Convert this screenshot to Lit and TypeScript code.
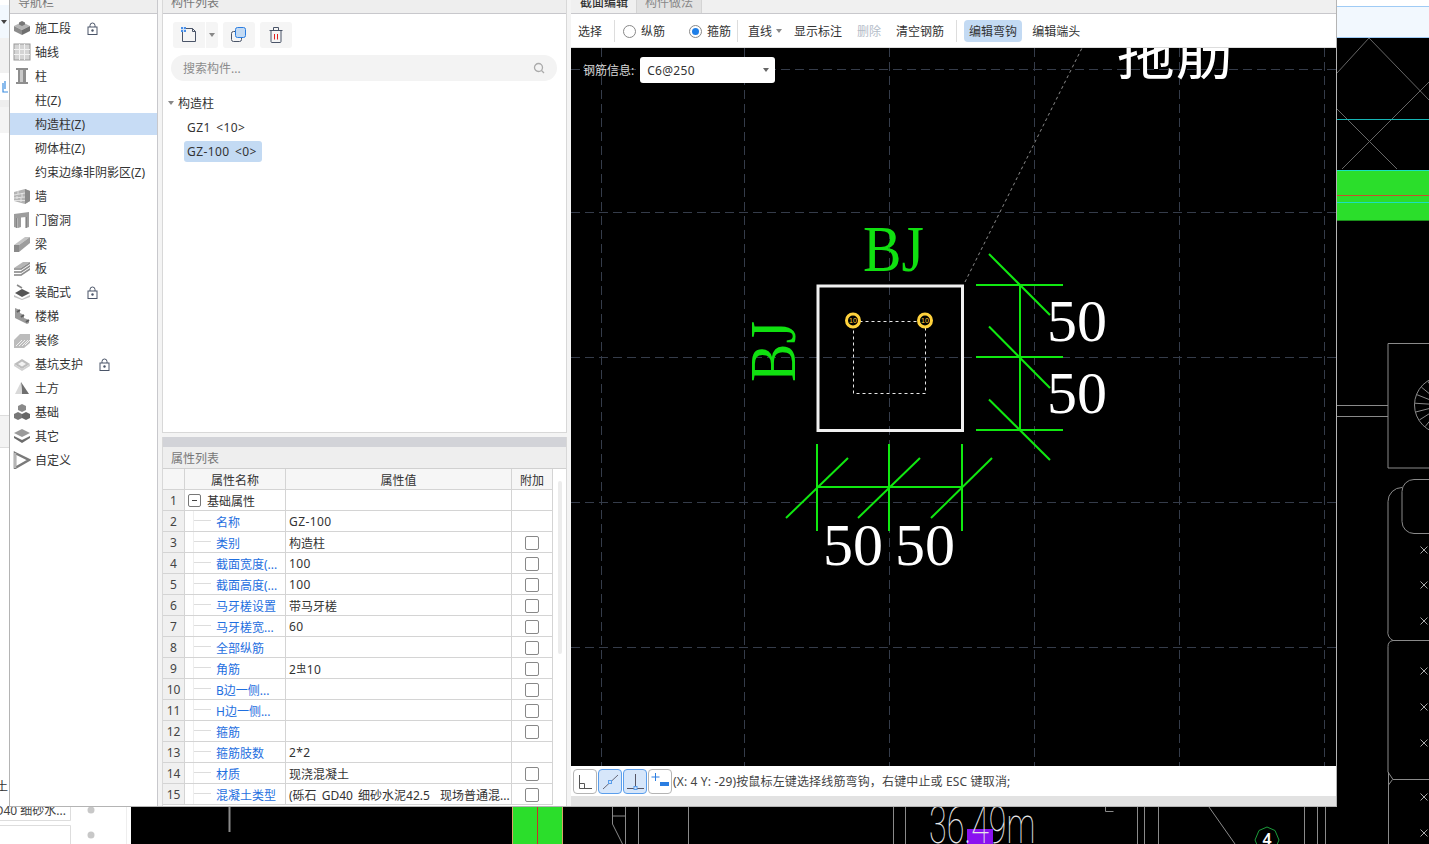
import { LitElement, html, css, svg } from "lit";
import { customElement } from "lit/decorators.js";

const navIcons: Record<string, unknown> = {
  box: svg`<path d="M1 7l8-4 8 4-8 4z" fill="#b5b5b5"/><path d="M1 7v5l8 4v-5z" fill="#8c8c8c"/><path d="M17 7v5l-8 4v-5z" fill="#6f6f6f"/><path d="M6 3.500l3-1.500 3 1.500v2l-3 1.500-3-1.500z" fill="#777"/>`,
  grid: svg`<rect x="1" y="1" width="16" height="16" fill="#d4d4d4" stroke="#999"/><path d="M6.500 1v16M11.500 1v16M1 6.500h16M1 11.500h16" stroke="#f2f2f2"/>`,
  column: svg`<path d="M3 1h12v2h-2v12h2v2H3v-2h2V3H3z" fill="#8e8e8e"/><rect x="7" y="3" width="3" height="12" fill="#c9c9c9"/>`,
  wall: svg`<path d="M1 5l11-3 5 2v10l-5 3-11-3z" fill="#b4b4b4"/><path d="M12 2v15l5-3V4z" fill="#8a8a8a"/><path d="M1 8l11-2M1 11l11-1M1 13.500l11 0M5 4v3M9 6v4M4 9v3M8 11v4" stroke="#eee" stroke-width=".8" fill="none"/>`,
  door: svg`<path d="M1 3l15-2v15l-3 1V6L8 6.500V16l-3 1V7L4 7.200V17l-3-1z" fill="#9d9d9d"/><path d="M4 7v10M13 6v11" stroke="#6e6e6e"/>`,
  beam: svg`<path d="M1 10l11-8h5l-11 8z" fill="#c4c4c4"/><path d="M1 10h5v7H1z" fill="#8a8a8a"/><path d="M6 10l11-8v6L6 17z" fill="#9d9d9d"/>`,
  slab: svg`<path d="M1 9l9-6h7l-9 6z" fill="#b5b5b5"/><path d="M1 9h7v2H1zM1 12h7v2H1zM1 15h7v2H1z" fill="#a0a0a0"/><path d="M8 9l9-6v2l-9 6zM8 12l9-6v2l-9 6zM8 15l9-6v2l-9 6z" fill="#8c8c8c"/>`,
  tray: svg`<path d="M2 10l7-4 8 4-8 4z" fill="#555"/><path d="M1 12l8 4 8-4v2l-8 3-8-3z" fill="#c0c0c0"/><path d="M4 2l5 3" stroke="#888" stroke-width="1.500"/>`,
  stairs: svg`<path d="M2 1l5 2v3l4 2v3l5 2v3l-2 1-12-6z" fill="#9a9a9a"/><path d="M7 3l-3 2M11 8l-3 2M16 13l-3 2" stroke="#5f5f5f" stroke-width="2"/>`,
  finish: svg`<path d="M1 9l6-6h10v9l-6 5H1z" fill="#bcbcbc"/><path d="M3 15l6-6M6 15l6-6M9 15l6-6M12 14l5-5" stroke="#f0f0f0"/>`,
  pit: svg`<path d="M1 9l8-5 8 5-8 5z" fill="#bdbdbd"/><path d="M5 9l4-2.500L13 9l-4 2.500z" fill="#f2f2f2"/><path d="M1 9v2l8 5 8-5V9l-8 5z" fill="#d0d0d0"/>`,
  earth: svg`<path d="M8 3l8 12H9z" fill="#6f6f6f"/><path d="M8 3L2 15h7z" fill="#d9d9d9"/>`,
  found: svg`<path d="M9 1l4 2v4l-4 2-4-2V3z" fill="#8a8a8a"/><path d="M5 9l4 2v4l-4 2-4-2v-4z" fill="#777"/><path d="M13 9l4 2v4l-4 2-4-2v-4z" fill="#666"/>`,
  layers: svg`<path d="M9 2l8 4-8 4-8-4z" fill="#9a9a9a"/><path d="M1 9l8 4 8-4v2l-8 5-8-5z" fill="#6c6c6c"/>`,
  custom: svg`<path d="M2 2l14 7-14 8z" fill="none" stroke="#7a7a7a" stroke-width="2.500"/><path d="M2 2v15" stroke="#b5b5b5" stroke-width="2.500"/>`,
};

const navRows = [
  { label: "施工段", icon: "box", lock: true },
  { label: "轴线", icon: "grid" },
  { label: "柱", icon: "column" },
  { label: "柱(Z)" },
  { label: "构造柱(Z)", selected: true },
  { label: "砌体柱(Z)" },
  { label: "约束边缘非阴影区(Z)" },
  { label: "墙", icon: "wall" },
  { label: "门窗洞", icon: "door" },
  { label: "梁", icon: "beam" },
  { label: "板", icon: "slab" },
  { label: "装配式", icon: "tray", lock: true },
  { label: "楼梯", icon: "stairs" },
  { label: "装修", icon: "finish" },
  { label: "基坑支护", icon: "pit", lock: true },
  { label: "土方", icon: "earth" },
  { label: "基础", icon: "found" },
  { label: "其它", icon: "layers" },
  { label: "自定义", icon: "custom" },
];

const propRows = [
  { name: "名称", value: "GZ-100" },
  { name: "类别", value: "构造柱", check: true },
  { name: "截面宽度(...", value: "100", check: true },
  { name: "截面高度(...", value: "100", check: true },
  { name: "马牙槎设置", value: "带马牙槎", check: true },
  { name: "马牙槎宽...", value: "60", check: true },
  { name: "全部纵筋", value: "", check: true },
  { name: "角筋", value: "rebar", check: true },
  { name: "B边一侧...", value: "", check: true },
  { name: "H边一侧...", value: "", check: true },
  { name: "箍筋", value: "", check: true },
  { name: "箍筋肢数", value: "2*2" },
  { name: "材质", value: "现浇混凝土", check: true },
  { name: "混凝土类型", value: "(砾石 GD40 细砂水泥42.5  现场普通混...", check: true },
];

const lockIcon = html`<svg class="lock" width="11" height="13" viewBox="0 0 11 13">
  <path d="M3 5V3.500a2.500 2.500 0 0 1 5 0V5" fill="none" stroke="#4a5468"/>
  <rect x="1" y="5" width="9" height="7.500" fill="#fff" stroke="#4a5468"/>
  <circle cx="5.500" cy="8.500" r="1.200" fill="#4a5468"/>
</svg>`;

@customElement("app-root")
export class AppRoot extends LitElement {
  static styles = css`
    :host {
      display: block;
      position: relative;
      width: 1429px;
      height: 844px;
      overflow: hidden;
      background: #fff;
      font-family: "Noto Sans", "Noto Sans CJK SC", sans-serif;
      font-size: 12px;
      color: #333;
    }
    .backdrop {
      position: absolute;
      inset: 0;
    }
    .dialog {
      position: absolute;
      left: 9px;
      top: -11px;
      width: 1328px;
      height: 818px;
      box-sizing: border-box;
      border: 1px solid #b4b4b4;
      background: #f4f4f4;
      display: grid;
      grid-template-columns: 148px 405px 765px;
      column-gap: 4px;
    }
    .panel {
      background: #fff;
      display: flex;
      flex-direction: column;
      min-height: 0;
    }
    .head {
      height: 23px;
      flex: none;
      display: flex;
      align-items: center;
      padding-left: 8px;
      background: #eee;
      border-bottom: 1px solid #c8c8cc;
      color: #777;
    }
    .nav {
      border-right: 1px solid #c8c8cc;
      box-sizing: border-box;
    }
    .nav-list {
      padding-top: 3px;
      display: flex;
      flex-direction: column;
      gap: 2px;
    }
    .nav-row {
      height: 22px;
      display: flex;
      align-items: center;
      padding-left: 3px;
    }
    .nav-row.selected {
      background: #c7dcf5;
    }
    .nav-icon {
      width: 18px;
      height: 18px;
      flex: none;
      margin-right: 4px;
    }
    .nav-gap {
      width: 18px;
      flex: none;
      margin-right: 4px;
    }
    .nav-label {
      white-space: nowrap;
    }
    .lock {
      margin-left: 16px;
      flex: none;
    }
    .mid {
      display: flex;
      flex-direction: column;
      gap: 4px;
      min-height: 0;
    }
    .list {
      height: 443px;
      flex: none;
      border: 1px solid #d8d8d8;
      border-top: none;
      box-sizing: border-box;
    }
    .tools {
      display: flex;
      align-items: center;
      padding: 8px 0 0 10px;
      height: 26px;
      flex: none;
    }
    .tool {
      height: 26px;
      background: #f5f5f5;
      border-radius: 3px;
      display: flex;
      align-items: center;
      justify-content: center;
      width: 32px;
      margin-right: 5px;
    }
    .tool.main {
      margin-right: 1px;
      border-radius: 3px 0 0 3px;
    }
    .tool.drop {
      width: 12px;
      border-radius: 0 3px 3px 0;
    }
    .caret {
      width: 0;
      height: 0;
      border-left: 3px solid transparent;
      border-right: 3px solid transparent;
      border-top: 4px solid #888;
    }
    .search {
      margin: 7px 9px 0 8px;
      height: 26px;
      flex: none;
      border-radius: 13px;
      background: #f3f3f3;
      display: flex;
      align-items: center;
      justify-content: space-between;
      padding: 0 12px;
      color: #8c8c8c;
    }
    .tree {
      padding: 10px 0 0 5px;
    }
    .tree-root {
      height: 24px;
      display: flex;
      align-items: center;
      gap: 4px;
    }
    .tree-leaf {
      height: 21px;
      display: inline-flex;
      align-items: center;
      padding: 0 5px 0 3px;
      margin: 1.500px 0 1.500px 16px;
      border-radius: 3px;
      word-spacing: 2px;
      letter-spacing: 0.4px;
    }
    .tree-leaf.selected {
      background: #c3daf3;
    }
    .props {
      flex: 1;
      min-height: 0;
      display: flex;
      flex-direction: column;
      border: 1px solid #d8d8d8;
      border-top: none;
      border-bottom: none;
      box-sizing: border-box;
    }
    .band {
      height: 10px;
      flex: none;
      background: #d2d3d8;
    }
    .props .head {
      height: 21px;
      border-bottom: 1px solid #d0d0d0;
    }
    .table-wrap {
      position: relative;
      flex: 1;
      min-height: 0;
    }
    .thumb {
      position: absolute;
      left: 395px;
      top: 12px;
      width: 4px;
      height: 173px;
      border-radius: 2px;
      background: #ececec;
    }
    .tr {
      display: grid;
      grid-template-columns: 22px 101px 226px 41px;
      width: 390px;
      height: 21px;
    }
    .td {
      box-sizing: border-box;
      border-right: 1px solid #d4d4d4;
      border-bottom: 1px solid #d4d4d4;
      padding-top: 1px;
      display: flex;
      align-items: center;
      min-width: 0;
      white-space: nowrap;
      overflow: hidden;
    }
    .td.idx {
      background: #f0f0f0;
      justify-content: center;
      color: #444;
    }
    .header .td {
      background: #f6f6f6;
      justify-content: center;
    }
    .td.name {
      color: #1f6fe0;
      position: relative;
      padding-left: 31px;
    }
    .td.name.root {
      color: #333;
      padding-left: 3px;
      gap: 6px;
    }
    .tick {
      position: absolute;
      left: 8px;
      top: 0;
      bottom: 0;
      width: 17px;
      border-left: 1px solid #eee;
    }
    .tick::after {
      content: "";
      position: absolute;
      left: 0;
      right: 0;
      top: 9px;
      border-top: 1px solid #ddd;
    }
    .minus {
      width: 11px;
      height: 11px;
      border: 1px solid #777;
      border-radius: 2px;
      display: flex;
      align-items: center;
      justify-content: center;
      flex: none;
    }
    .minus::after {
      content: "";
      width: 5px;
      border-top: 1px solid #444;
    }
    .td.val {
      padding-left: 3px;
      white-space: pre;
      word-spacing: 2px;
    }
    .td.val.latin {
      letter-spacing: 0.4px;
    }
    .td.add {
      justify-content: center;
    }
    .check {
      width: 12px;
      height: 12px;
      border: 1px solid #888;
      border-radius: 2px;
      background: #fff;
    }
    .rebar {
      font-size: 10px;
      vertical-align: 2px;
    }
    .editor {
      display: flex;
      flex-direction: column;
      min-height: 0;
    }
    .tabs {
      height: 23px;
      flex: none;
      display: flex;
      padding-left: 1px;
      background: #f0f0f0;
      border-bottom: 1px solid #c8c8cc;
    }
    .tab {
      width: 65px;
      display: flex;
      align-items: center;
      justify-content: center;
      box-sizing: border-box;
      border-right: 1px solid #d4d4d4;
      color: #333;
      font-weight: 500;
    }
    .tab.off {
      background: #e2e2e2;
      color: #888;
      font-weight: 400;
    }
    .bar {
      height: 34px;
      flex: none;
      display: flex;
      align-items: center;
      padding: 1px 0 0 7px;
      background: #fff;
      box-sizing: border-box;
      border-bottom: 1px solid #ddd;
      white-space: nowrap;
    }
    .sep {
      width: 1px;
      height: 22px;
      background: #ddd;
      flex: none;
    }
    .sep.a {
      margin: 0 8px 0 12px;
    }
    .sep.b {
      margin: 0 10px 0 6px;
    }
    .sep.c {
      margin: 0 7px 0 12px;
    }
    .radio {
      display: flex;
      align-items: center;
      gap: 5px;
    }
    .radio + .radio {
      margin-left: 24px;
    }
    .dot {
      width: 13px;
      height: 13px;
      box-sizing: border-box;
      border: 1px solid #888;
      border-radius: 50%;
      display: flex;
      align-items: center;
      justify-content: center;
    }
    .dot.on::after {
      content: "";
      width: 7px;
      height: 7px;
      border-radius: 50%;
      background: #1f7fe8;
    }
    .act {
      margin-left: 15px;
    }
    .act.first {
      margin-left: 12px;
    }
    .act.last {
      margin-left: 10px;
    }
    .act.dim {
      color: #b4bcc8;
    }
    .hot {
      background: #c3daf3;
      border-radius: 4px;
      padding: 3px 5px;
      height: 16px;
      display: flex;
      align-items: center;
    }
    .line-type {
      display: flex;
      align-items: center;
      gap: 4px;
    }
    .canvas {
      height: 718px;
      flex: none;
      position: relative;
      background: #000;
      overflow: hidden;
    }
    .canvas svg {
      position: absolute;
      inset: 0;
    }
    .rebar-info {
      position: absolute;
      left: 12px;
      top: 9px;
      display: flex;
      align-items: center;
      gap: 6px;
      color: #d8d8d8;
    }
    .select {
      width: 135px;
      height: 26px;
      box-sizing: border-box;
      background: #fff;
      border-radius: 3px;
      color: #333;
      display: flex;
      align-items: center;
      justify-content: space-between;
      padding: 0 6px 0 7px;
      letter-spacing: 0.3px;
    }
    .select .caret {
      border-top-color: #666;
    }
    .status {
      height: 30px;
      box-sizing: border-box;
      flex: none;
      background: #fff;
      display: flex;
      align-items: flex-start;
      padding: 3px 0 0 2px;
      gap: 1px;
      white-space: nowrap;
    }
    .st-btn {
      width: 24px;
      height: 25px;
      box-sizing: border-box;
      border: 1px solid #b4b4b4;
      border-radius: 4px;
      background: #fff;
      flex: none;
    }
    .st-btn.on {
      border-color: #5a9eec;
      background: #d6e6fa;
    }
    .st-text {
      line-height: 25px;
      color: #444;
      letter-spacing: 0.15px;
    }
    .foot {
      height: 10px;
      flex: none;
      background: #e2e2e2;
    }
  `;

  backdrop() {
    const crosses = [550, 585, 621, 671, 707, 743, 797, 833];
    const spokes = [0, 1, 2, 3, 4, 5, 6, 7].map((i) => {
      const a = Math.PI * (0.62 + i * 0.1);
      return svg`<line x1=${1443 + 28 * Math.cos(a)} y1=${405 + 28 * Math.sin(a)} x2=${1443 + 10 * Math.cos(a)} y2=${405 + 10 * Math.sin(a)} />`;
    });
    return html`<svg class="backdrop" width="1429" height="844" viewBox="0 0 1429 844">
      <rect x="1337" y="38" width="92" height="806" fill="#000" />
      <rect x="131" y="807" width="1298" height="37" fill="#000" />
      <rect x="1337" y="6" width="92" height="32" fill="#f2f8fe" />
      <path d="M1337 6.500h92M1337 37.500h92" stroke="#9fcbf5" />

      <rect x="0" y="5" width="9" height="33" fill="#f2f8fe" />
      <path d="M1 20h6l-3 4z" fill="#444" />
      <rect x="0" y="38" width="9" height="35" fill="#f1f1f1" />
      <rect x="0" y="100" width="9" height="7" fill="#eee" />
      <rect x="0" y="107" width="9" height="26" fill="#f4f4f4" />
      <path d="M3 83v9h5M5 81v8" fill="none" stroke="#3c8ee0" stroke-width="1.200" />
      <rect x="0" y="415" width="9" height="33" fill="#f3f3f3" />
      <path d="M0 415.500h9M0 447.500h9" stroke="#ddd" />
      <text x="-4" y="791" font-size="12" fill="#333">土</text>

      <path d="M0 820.500h70.500V807M0 825.500h70.500V844" fill="none" stroke="#ddd" />
      <text x="66" y="815" font-size="12" fill="#444" text-anchor="end">GD40 细砂水...</text>
      <circle cx="91" cy="810" r="3.500" fill="#c8c8c8" />
      <circle cx="91" cy="835" r="3.500" fill="#c8c8c8" />
      <path d="M126.500 807v37" stroke="#eee" />

      <g fill="none" stroke="#666" stroke-width="1">
        <path d="M1337 73L1369 38L1429 100M1337 109L1397 169M1342 169L1429 82" />
      </g>
      <path d="M1337 119.500h92" stroke="#17b5b5" />
      <rect x="1337" y="170" width="92" height="50" fill="#2bde2b" />
      <path d="M1337 170.500h92M1337 202.500h92" stroke="#19e0c0" />
      <path d="M1337 195.500h92" stroke="#c8502a" />
      <path d="M1337 220.500h92" stroke="#1b8f1b" />

      <g fill="none" stroke="#8a8a8a" stroke-width="1">
        <path d="M1429 343.500h-41v124.500h41M1337 405.500h51M1337 416.500h51" />
        <circle cx="1443" cy="405" r="28.500" />
        ${spokes}
        <path d="M1429 479.500h-15a12 12 0 0 0-12 12v30a12 12 0 0 0 12 12h15" />
        <path d="M1402 487.500a14 14 0 0 0-14 14V630a10 10 0 0 0 5 10.500h36" />
        <path d="M1393 640.500a6 6 0 0 0-5 6V772l5 7.500h36" />
        <path d="M1388.500 785l4-5.500M1388.500 772v72" />
      </g>
      <g fill="none" stroke="#a8a8a8">
        ${crosses.map((y) => svg`<path d="M1420.500 ${y - 3.500}l7 7m0-7l-7 7" />`)}
      </g>

      <rect x="513" y="807" width="49" height="37" fill="#2bde2b" />
      <path d="M512.500 807v37M562.500 807v37" stroke="#d9a06a" />
      <path d="M537.500 807v37" stroke="#c8302a" />
      <g fill="none" stroke="#8a8a8a">
        <path d="M229.500 807v25" stroke-width="2" />
        <path d="M612.500 807v17l10 20M625.500 807v37M612 816h13" />
        <path d="M638.500 807v37M688.500 807v37M893.500 807v37M905.500 807v37M1137.500 807v37M1144.500 807v37M1158.500 807v37M1304.500 807v37M1317.500 807v37M1325.500 807v37M1209 807l26 37M1105.500 807v4.500h8" />
      </g>
      <rect x="967" y="829" width="26" height="15" fill="#8a12f0" />
      <text transform="translate(929 843) scale(.62 1)" font-family="Roboto" font-weight="100" font-size="52" fill="#e8e8e8">36.49m</text>
      <path d="M1267 827l8 3.500 4 9.500-4 9.500h-16l-4-9.500 4-9.500z" fill="none" stroke="#1b9c3a" />
      <text x="1267" y="845" font-size="16" font-weight="600" fill="#fff" text-anchor="middle">4</text>
    </svg>`;
  }

  drawing() {
    const greenDiag = [
      [989, 254, 1050, 315],
      [989, 326.5, 1050, 388],
      [989, 399.5, 1050, 460],
      [786, 518, 848, 458],
      [858, 518, 920, 458],
      [931, 518, 992, 458],
    ];
    const gridX = [601, 744, 889, 1034, 1179, 1324];
    const gridY = [69, 212, 357, 502, 647];
    return html`<svg width="765" height="718" viewBox="571 48 765 718">
      <g stroke="#353c4a" stroke-dasharray="9 5" fill="none">
        ${gridX.map((x) => svg`<line x1=${x + 0.5} y1="48" x2=${x + 0.5} y2="766" />`)}
        ${gridY.map((y) => svg`<line x1="571" y1=${y + 0.5} x2="1336" y2=${y + 0.5} />`)}
      </g>
      <path d="M965 282L1082 48" stroke="#8a8a8a" stroke-dasharray="3 3" fill="none" />
      <text x="1117" y="74" font-family="'Noto Sans CJK SC'" font-weight="400" font-size="58" fill="#fff">拖筋</text>

      <rect x="818" y="286" width="144.500" height="144.500" fill="none" stroke="#f0f0f0" stroke-width="3" />
      <path d="M853.500 321.500h72v72h-72z" fill="none" stroke="#e8e8e8" stroke-dasharray="3 3" />
      <g fill="#000" stroke="#ffd23c" stroke-width="3">
        <circle cx="853" cy="320.500" r="6.500" />
        <circle cx="925" cy="320.500" r="6.500" />
      </g>
      <g font-size="7" fill="#ffd23c" text-anchor="middle" font-family="'Liberation Sans'">
        <text x="853" y="323">10</text>
        <text x="925" y="323">10</text>
      </g>

      <g stroke="#10e810" stroke-width="2" fill="none">
        <path d="M1020 285v145M976 285h87M976 357h87M976 430h87" />
        <path d="M817 487h145M817 444v87M889 444v87M962 444v87" />
        ${greenDiag.map((d) => svg`<line x1=${d[0]} y1=${d[1]} x2=${d[2]} y2=${d[3]} />`)}
      </g>

      <g font-family="'Liberation Serif'" font-size="60">
        <text transform="translate(863 271) scale(.96 1.08)" fill="#10e010">BJ</text>
        <text transform="translate(795 382) rotate(-90) scale(.96 1.08)" fill="#10e010">BJ</text>
        <g fill="#fff">
          <text x="1047" y="341">50</text>
          <text x="1047" y="413">50</text>
          <text x="823" y="565">50</text>
          <text x="895" y="565">50</text>
        </g>
      </g>
    </svg>`;
  }

  statusIcons() {
    return html`
      <div class="st-btn">
        <svg width="22" height="23" viewBox="0 0 22 23" fill="none" stroke="#555">
          <path d="M5.500 5v13.500H18M5.500 13.500h5v5" />
        </svg>
      </div>
      <div class="st-btn on">
        <svg width="22" height="23" viewBox="0 0 22 23" fill="none" stroke="#667">
          <path d="M4 19L19 5" />
          <rect x="9.500" y="10.500" width="3" height="3" fill="#cfe0f6" stroke="#5a9eec" />
        </svg>
      </div>
      <div class="st-btn on">
        <svg width="22" height="23" viewBox="0 0 22 23" fill="none" stroke="#556">
          <path d="M11.500 4v14M3 18.500h17" />
          <rect x="10" y="16.500" width="3" height="3" fill="#cfe0f6" stroke="#5a9eec" />
        </svg>
      </div>
      <div class="st-btn">
        <svg width="22" height="23" viewBox="0 0 22 23" fill="none">
          <path d="M6.500 3v8M2.500 7h8" stroke="#2a7de1" />
          <rect x="11" y="12" width="9" height="4" fill="#2a7de1" />
        </svg>
      </div>
    `;
  }

  listPanel() {
    return html`<div class="panel list">
      <div class="head">构件列表</div>
      <div class="tools">
        <div class="tool main">
          <svg width="18" height="18" viewBox="0 0 18 18" fill="none">
            <path d="M2.500 4v11.500h13V5.500l-3-3H6" stroke="#4a5468" />
            <path d="M12.500 2.500v3h3" stroke="#4a5468" />
            <rect x="1" y="1" width="5" height="5" fill="#4a90e8" />
            <path d="M1 3.500h5M3.500 1v5" stroke="#cfe0f6" />
          </svg>
        </div>
        <div class="tool drop"><span class="caret"></span></div>
        <div class="tool">
          <svg width="18" height="18" viewBox="0 0 18 18" fill="none">
            <rect x="1.500" y="5.500" width="10" height="10" rx="2" stroke="#4a5468" />
            <rect x="5.500" y="1.500" width="10" height="10" rx="2" fill="#c3daf3" stroke="#2a7de1" />
          </svg>
        </div>
        <div class="tool">
          <svg width="16" height="18" viewBox="0 0 16 18" fill="none" stroke="#4a5468">
            <path d="M1.500 4.500h13M3 4.500V15.500a1 1 0 0 0 1 1h8a1 1 0 0 0 1-1V4.500M5.500 4.500V1.500h5v3" />
            <path d="M6.500 8v5.500M9.500 8v5.500" stroke="#e02020" />
          </svg>
        </div>
      </div>
      <div class="search">
        <span>搜索构件...</span>
        <svg width="12" height="12" viewBox="0 0 12 12" fill="none" stroke="#aaa" stroke-width="1.300">
          <circle cx="5.500" cy="5.500" r="4" /><path d="M8.500 8.500l2.500 2.500" />
        </svg>
      </div>
      <div class="tree">
        <div class="tree-root"><span class="caret"></span>构造柱</div>
        <div><span class="tree-leaf">GZ1 &lt;10&gt;</span></div>
        <div><span class="tree-leaf selected">GZ-100 &lt;0&gt;</span></div>
      </div>
    </div>`;
  }

  propsPanel() {
    return html`<div class="panel props">
      <div class="band"></div>
      <div class="head">属性列表</div>
      <div class="table-wrap">
        <div class="tr header">
          <div class="td"></div>
          <div class="td">属性名称</div>
          <div class="td">属性值</div>
          <div class="td">附加</div>
        </div>
        <div class="tr">
          <div class="td idx">1</div>
          <div class="td name root"><span class="minus"></span>基础属性</div>
          <div class="td"></div>
          <div class="td"></div>
        </div>
        ${propRows.map(
          (r, i) => html`<div class="tr">
            <div class="td idx">${i + 2}</div>
            <div class="td name"><span class="tick"></span>${r.name}</div>
            <div class="td val ${/^[\x20-\x7e]+$/.test(r.value) ? "latin" : ""}">${r.value === "rebar"
              ? html`<span>2<span class="rebar">虫</span>10</span>`
              : r.value}</div>
            <div class="td add">${r.check ? html`<span class="check"></span>` : ""}</div>
          </div>`
        )}
        <div class="thumb"></div>
      </div>
    </div>`;
  }

  render() {
    return html`
      ${this.backdrop()}
      <div class="dialog">
        <div class="panel nav">
          <div class="head">导航栏</div>
          <div class="nav-list">
            ${navRows.map(
              (r) => html`<div class="nav-row ${r.selected ? "selected" : ""}">
                ${r.icon
                  ? html`<svg class="nav-icon" viewBox="0 0 18 18">${navIcons[r.icon]}</svg>`
                  : html`<span class="nav-gap"></span>`}
                <span class="nav-label">${r.label}</span>
                ${r.lock ? lockIcon : ""}
              </div>`
            )}
          </div>
        </div>

        <div class="mid">
          ${this.listPanel()} ${this.propsPanel()}
        </div>

        <div class="panel editor">
          <div class="tabs">
            <div class="tab">截面编辑</div>
            <div class="tab off">构件做法</div>
          </div>
          <div class="bar">
            <span>选择</span>
            <span class="sep a"></span>
            <label class="radio"><span class="dot"></span>纵筋</label>
            <label class="radio"><span class="dot on"></span>箍筋</label>
            <span class="sep b"></span>
            <span class="line-type">直线<span class="caret"></span></span>
            <span class="act first">显示标注</span>
            <span class="act dim">删除</span>
            <span class="act">清空钢筋</span>
            <span class="sep c"></span>
            <span class="hot">编辑弯钩</span>
            <span class="act last">编辑端头</span>
          </div>
          <div class="canvas">
            ${this.drawing()}
            <div class="rebar-info">
              <span>钢筋信息:</span>
              <div class="select"><span>C6@250</span><span class="caret"></span></div>
            </div>
          </div>
          <div class="status">
            ${this.statusIcons()}
            <span class="st-text">(X: 4 Y: -29)按鼠标左键选择线筋弯钩，右键中止或 ESC 键取消;</span>
          </div>
          <div class="foot"></div>
        </div>
      </div>
    `;
  }
}
